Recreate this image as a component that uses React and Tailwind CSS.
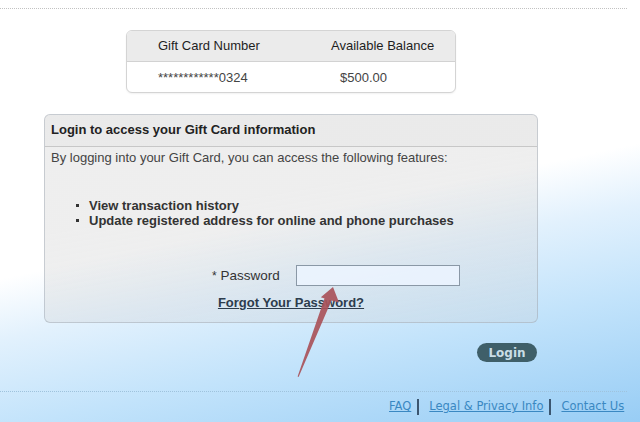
import React from "react";

export default function App() {
  return (
    <div className="relative w-[640px] h-[422px] overflow-hidden bg-[linear-gradient(168deg,#ffffff_0%,#ffffff_50%,#e2f1fd_61%,#c2e3fb_77%,#98cdf5_100%)] font-['Liberation_Sans',Arial,sans-serif] text-[13px]">
      <div className="pt-[8px]">
        <div className="w-[627px] border-t border-dotted border-[#c2c2c2]" />
      </div>

      {/* Gift card table */}
      <div className="mt-[21px] ml-[126px] w-[330px] rounded-[6px] border border-[#d4d4d4] bg-white overflow-hidden shadow-[0_1px_2px_rgba(0,0,0,0.06)]">
        <div className="h-[31px] bg-[#ebebeb] border-b border-[#d2d2d2] grid grid-cols-[173px_1fr] items-center pl-[31px] text-[#1e1e1e]">
          <span>Gift Card Number</span>
          <span>Available Balance</span>
        </div>
        <div className="h-[30px] grid grid-cols-[173px_1fr] items-center pl-[31px] text-[#444]">
          <span className="pt-[2px]">************0324</span>
          <span className="pl-[9px] pt-[2px]">$500.00</span>
        </div>
      </div>

      {/* Login panel */}
      <div className="mt-[21px] ml-[44px] w-[494px] h-[209px] rounded-[6px] border border-[rgba(150,160,170,0.45)] bg-[linear-gradient(170deg,rgba(215,215,215,0.42)_40%,rgba(205,210,215,0.3)_100%)] overflow-hidden">
        <div className="h-[32px] border-b border-[rgba(170,170,170,0.55)] bg-[rgba(225,225,225,0.3)] flex items-center pl-[6px] pb-[2px] font-bold text-[#222]">
          Login to access your Gift Card information
        </div>
        <div className="pl-[6px] pt-[3px] leading-[16px] text-[#444]">
          By logging into your Gift Card, you can access the following features:
        </div>
        <div className="mt-[32px] pl-[31px] font-bold text-[#333] leading-[15px]">
          <div className="flex items-center">
            <span className="w-[3px] h-[3px] bg-[#333] mr-[10px]" />
            <span>View transaction history</span>
          </div>
          <div className="flex items-center">
            <span className="w-[3px] h-[3px] bg-[#333] mr-[10px]" />
            <span>Update registered address for online and phone purchases</span>
          </div>
        </div>
        <div className="mt-[37px] ml-[167px] flex items-center">
          <span className="w-[84px] text-[#333] text-[13.5px] leading-[16px] pt-[1px]">
            <span className="text-[12px]">*</span> Password
          </span>
          <div className="w-[164px] h-[21px] border border-[#8a98a6] bg-[rgba(236,245,255,0.85)]" />
        </div>
        <div className="mt-[9px] text-center leading-[16px]">
          <span className="font-bold underline text-[#2d3d4d]">Forgot Your Password?</span>
        </div>
      </div>

      {/* Login button */}
      <div className="mt-[20px] ml-[477px] w-[60px] h-[19px] rounded-full bg-[#3f5f69] flex items-center justify-center font-['DejaVu_Sans',Verdana,sans-serif] font-bold text-[12px] text-[#c9dde6]">
        Login
      </div>

      {/* Footer */}
      <div className="mt-[29px] w-[627px] border-t border-dotted border-[#9fc3dd]" />
      <div className="mt-[6px] ml-[389px] flex items-center h-[17px] font-['DejaVu_Sans',Verdana,sans-serif] text-[11.5px] text-[#3a88c2]">
        <span className="underline pt-[1px]">FAQ</span>
        <span className="ml-[6px] mr-[10px] w-[2px] h-[16px] bg-[#3b5670]" />
        <span className="underline pt-[1px]">Legal &amp; Privacy Info</span>
        <span className="ml-[6px] mr-[10px] w-[2px] h-[16px] bg-[#3b5670]" />
        <span className="underline pt-[1px]">Contact Us</span>
      </div>

      {/* annotation arrow */}
      <svg className="absolute inset-0 pointer-events-none" width="640" height="422" viewBox="0 0 640 422">
        <polygon
          points="333,287 339,302.5 331.5,300.5 298.6,377 297.6,376.6 324.5,298.4 320.8,297.2"
          fill="#a9535a"
          opacity="0.92"
        />
      </svg>
    </div>
  );
}
